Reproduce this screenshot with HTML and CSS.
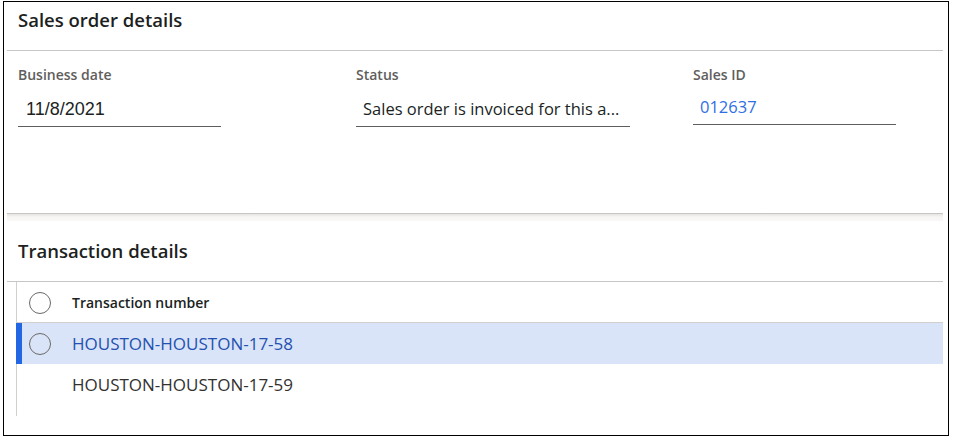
FILE: index.html
```html
<!DOCTYPE html>
<html lang="en">
<head>
<meta charset="utf-8">
<title>Sales order details</title>
<link rel="stylesheet" href="styles.css">
</head>
<body>
<div class="frame">
  <section class="card">
    <h2 class="title">Sales order details</h2>
    <div class="fields">
      <div class="field field-date">
        <div class="label">Business date</div>
        <div class="value value-date">11/8/2021</div>
      </div>
      <div class="field field-status">
        <div class="label">Status</div>
        <div class="value">Sales order is invoiced for this a...</div>
      </div>
      <div class="field field-id">
        <div class="label">Sales ID</div>
        <div class="value value-link">012637</div>
      </div>
    </div>
  </section>
  <div class="band"></div>
  <section class="tx">
    <h2 class="title tx-title">Transaction details</h2>
    <div class="grid">
      <div class="row row-header">
        <span class="check"></span>
        <span class="col-head">Transaction number</span>
      </div>
      <div class="row row-selected">
        <span class="check"></span>
        <span class="cell">HOUSTON-HOUSTON-17-58</span>
      </div>
      <div class="row row-plain">
        <span class="check check-hidden"></span>
        <span class="cell">HOUSTON-HOUSTON-17-59</span>
      </div>
    </div>
  </section>
</div>
</body>
</html>
```

FILE: styles.css
```css
* { box-sizing: border-box; }

html, body {
  margin: 0;
  padding: 0;
  background: #ffffff;
}

body {
  font-family: "Open Sans", "Noto Sans", sans-serif;
  color: #201f1e;
}

.frame {
  margin: 1px 0 0 3px;
  width: 946px;
  height: 435px;
  border: 1px solid #000000;
  padding: 0 5px 0 3px;
  display: flex;
  flex-direction: column;
}

.card {
  height: 212px;
  border-bottom: 1px solid #c8c6c4;
}

.title {
  margin: 0;
  padding: 4px 0 16px 11px;
  font-size: 18.5px;
  line-height: 28px;
  font-weight: 600;
  color: #201f1e;
  border-bottom: 1px solid #c8c6c4;
}

.fields {
  display: grid;
  grid-template-columns: 338px 337px 1fr;
  padding: 14px 0 0 11px;
}

.field {
  display: flex;
  flex-direction: column;
}

.field-date { width: 203px; }
.field-status { width: 274px; }
.field-id { width: 203px; }

.label {
  font-size: 14px;
  line-height: 20px;
  font-weight: 600;
  color: #605e5c;
}

.value {
  padding: 12px 7px 5px;
  font-size: 16.5px;
  line-height: 24px;
  color: #201f1e;
  border-bottom: 1px solid #605e5c;
  white-space: nowrap;
  overflow: hidden;
}

.value-date {
  font-family: "Liberation Sans", Arial, sans-serif;
  font-size: 18px;
  padding-left: 8px;
}

.value-link {
  padding-top: 10px;
  padding-bottom: 5px;
  color: #2f6fe4;
}

.band {
  height: 7px;
  background: linear-gradient(#e4e3e2, #f6f5f4 40%, #f9f8f7);
}

.tx {
  flex: 1;
  display: flex;
  flex-direction: column;
}

.tx-title {
  padding-top: 16px;
  padding-bottom: 16px;
}

.grid {
  margin-left: 9px;
  height: 134px;
  border-left: 1px solid #d2d0ce;
  display: flex;
  flex-direction: column;
}

.row {
  display: flex;
  align-items: center;
  gap: 21px;
  padding-left: 12px;
}

.row-header {
  height: 40px;
  padding-top: 1px;
}

.row-selected {
  height: 42px;
  margin-left: -1px;
  padding-left: 13px;
  border-top: 1px solid #d2d0ce;
  background: #d9e4f8;
  box-shadow: inset 6px 0 0 #2266e3;
}

.row-plain {
  height: 41px;
}

.check {
  width: 22px;
  height: 22px;
  flex: none;
  border: 1px solid #6b6967;
  border-radius: 50%;
  background: transparent;
}

.check-hidden {
  visibility: hidden;
}

.col-head {
  font-size: 14px;
  font-weight: 600;
  color: #201f1e;
}

.cell {
  font-size: 17px;
  color: #323130;
}

.row-selected .cell {
  color: #2451b0;
}
```
